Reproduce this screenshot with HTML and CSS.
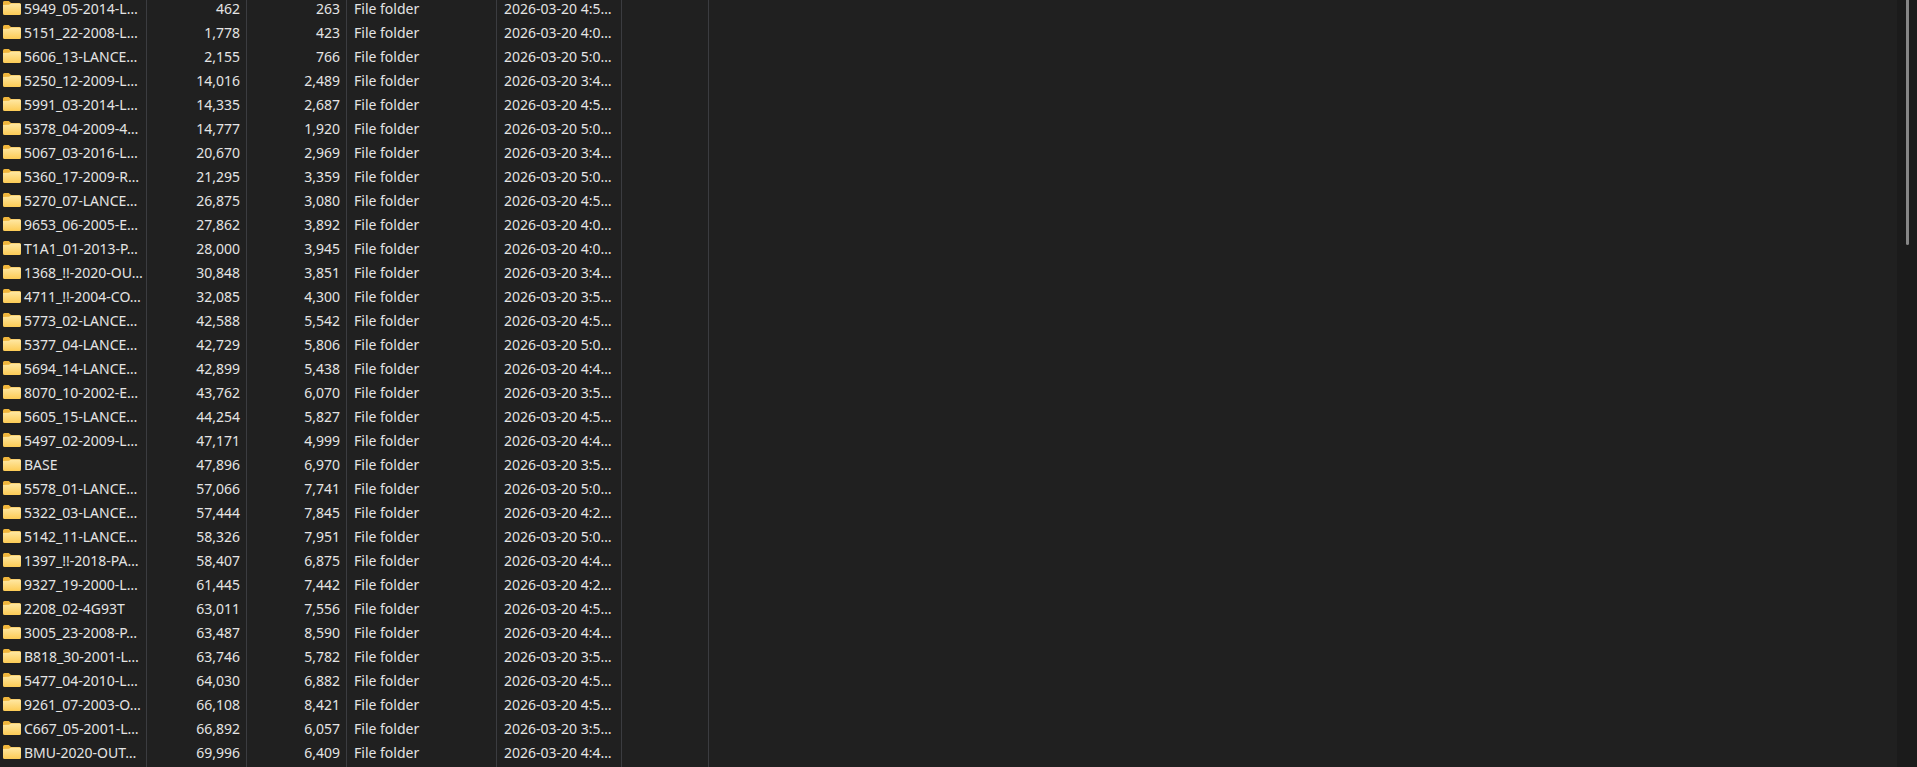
FILE: index.html
```html
<!DOCTYPE html>
<html lang="en">
<head>
<meta charset="UTF-8">
<title>File list</title>
<link rel="stylesheet" href="styles.css">
</head>
<body>
<svg class="defs" width="0" height="0">
  <defs>
    <linearGradient id="folderFront" x1="0" y1="0" x2="0" y2="1">
      <stop offset="0" stop-color="#ffe8a3"/>
      <stop offset="1" stop-color="#fccb55"/>
    </linearGradient>
    <symbol id="folder" viewBox="0 0 18 14">
      <path d="M0 1.500A1.500 1.500 0 0 1 1.500 0h4.300l2.200 2h8.500A1.500 1.500 0 0 1 18 3.500V6H0z" fill="#f0b63c"/>
      <path d="M0 4l6-.300L8 2.500h8.500A1.500 1.500 0 0 1 18 4v8.500A1.500 1.500 0 0 1 16.500 14h-15A1.500 1.500 0 0 1 0 12.500z" fill="url(#folderFront)"/>
    </symbol>
  </defs>
</svg>
<div class="window">
  <div class="list">
    <div class="row"><div class="cell name"><svg class="icon"><use href="#folder"/></svg>5949_05-2014-L…</div><div class="cell num">462</div><div class="cell num">263</div><div class="cell type">File folder</div><div class="cell date">2026-03-20 4:5…</div><div class="cell blank"></div></div>
    <div class="row"><div class="cell name"><svg class="icon"><use href="#folder"/></svg>5151_22-2008-L…</div><div class="cell num">1,778</div><div class="cell num">423</div><div class="cell type">File folder</div><div class="cell date">2026-03-20 4:0…</div><div class="cell blank"></div></div>
    <div class="row"><div class="cell name"><svg class="icon"><use href="#folder"/></svg>5606_13-LANCE…</div><div class="cell num">2,155</div><div class="cell num">766</div><div class="cell type">File folder</div><div class="cell date">2026-03-20 5:0…</div><div class="cell blank"></div></div>
    <div class="row"><div class="cell name"><svg class="icon"><use href="#folder"/></svg>5250_12-2009-L…</div><div class="cell num">14,016</div><div class="cell num">2,489</div><div class="cell type">File folder</div><div class="cell date">2026-03-20 3:4…</div><div class="cell blank"></div></div>
    <div class="row"><div class="cell name"><svg class="icon"><use href="#folder"/></svg>5991_03-2014-L…</div><div class="cell num">14,335</div><div class="cell num">2,687</div><div class="cell type">File folder</div><div class="cell date">2026-03-20 4:5…</div><div class="cell blank"></div></div>
    <div class="row"><div class="cell name"><svg class="icon"><use href="#folder"/></svg>5378_04-2009-4…</div><div class="cell num">14,777</div><div class="cell num">1,920</div><div class="cell type">File folder</div><div class="cell date">2026-03-20 5:0…</div><div class="cell blank"></div></div>
    <div class="row"><div class="cell name"><svg class="icon"><use href="#folder"/></svg>5067_03-2016-L…</div><div class="cell num">20,670</div><div class="cell num">2,969</div><div class="cell type">File folder</div><div class="cell date">2026-03-20 3:4…</div><div class="cell blank"></div></div>
    <div class="row"><div class="cell name"><svg class="icon"><use href="#folder"/></svg>5360_17-2009-R…</div><div class="cell num">21,295</div><div class="cell num">3,359</div><div class="cell type">File folder</div><div class="cell date">2026-03-20 5:0…</div><div class="cell blank"></div></div>
    <div class="row"><div class="cell name"><svg class="icon"><use href="#folder"/></svg>5270_07-LANCE…</div><div class="cell num">26,875</div><div class="cell num">3,080</div><div class="cell type">File folder</div><div class="cell date">2026-03-20 4:5…</div><div class="cell blank"></div></div>
    <div class="row"><div class="cell name"><svg class="icon"><use href="#folder"/></svg>9653_06-2005-E…</div><div class="cell num">27,862</div><div class="cell num">3,892</div><div class="cell type">File folder</div><div class="cell date">2026-03-20 4:0…</div><div class="cell blank"></div></div>
    <div class="row"><div class="cell name"><svg class="icon"><use href="#folder"/></svg>T1A1_01-2013-P…</div><div class="cell num">28,000</div><div class="cell num">3,945</div><div class="cell type">File folder</div><div class="cell date">2026-03-20 4:0…</div><div class="cell blank"></div></div>
    <div class="row"><div class="cell name"><svg class="icon"><use href="#folder"/></svg>1368_!!-2020-OU…</div><div class="cell num">30,848</div><div class="cell num">3,851</div><div class="cell type">File folder</div><div class="cell date">2026-03-20 3:4…</div><div class="cell blank"></div></div>
    <div class="row"><div class="cell name"><svg class="icon"><use href="#folder"/></svg>4711_!!-2004-CO…</div><div class="cell num">32,085</div><div class="cell num">4,300</div><div class="cell type">File folder</div><div class="cell date">2026-03-20 3:5…</div><div class="cell blank"></div></div>
    <div class="row"><div class="cell name"><svg class="icon"><use href="#folder"/></svg>5773_02-LANCE…</div><div class="cell num">42,588</div><div class="cell num">5,542</div><div class="cell type">File folder</div><div class="cell date">2026-03-20 4:5…</div><div class="cell blank"></div></div>
    <div class="row"><div class="cell name"><svg class="icon"><use href="#folder"/></svg>5377_04-LANCE…</div><div class="cell num">42,729</div><div class="cell num">5,806</div><div class="cell type">File folder</div><div class="cell date">2026-03-20 5:0…</div><div class="cell blank"></div></div>
    <div class="row"><div class="cell name"><svg class="icon"><use href="#folder"/></svg>5694_14-LANCE…</div><div class="cell num">42,899</div><div class="cell num">5,438</div><div class="cell type">File folder</div><div class="cell date">2026-03-20 4:4…</div><div class="cell blank"></div></div>
    <div class="row"><div class="cell name"><svg class="icon"><use href="#folder"/></svg>8070_10-2002-E…</div><div class="cell num">43,762</div><div class="cell num">6,070</div><div class="cell type">File folder</div><div class="cell date">2026-03-20 3:5…</div><div class="cell blank"></div></div>
    <div class="row"><div class="cell name"><svg class="icon"><use href="#folder"/></svg>5605_15-LANCE…</div><div class="cell num">44,254</div><div class="cell num">5,827</div><div class="cell type">File folder</div><div class="cell date">2026-03-20 4:5…</div><div class="cell blank"></div></div>
    <div class="row"><div class="cell name"><svg class="icon"><use href="#folder"/></svg>5497_02-2009-L…</div><div class="cell num">47,171</div><div class="cell num">4,999</div><div class="cell type">File folder</div><div class="cell date">2026-03-20 4:4…</div><div class="cell blank"></div></div>
    <div class="row"><div class="cell name"><svg class="icon"><use href="#folder"/></svg>BASE</div><div class="cell num">47,896</div><div class="cell num">6,970</div><div class="cell type">File folder</div><div class="cell date">2026-03-20 3:5…</div><div class="cell blank"></div></div>
    <div class="row"><div class="cell name"><svg class="icon"><use href="#folder"/></svg>5578_01-LANCE…</div><div class="cell num">57,066</div><div class="cell num">7,741</div><div class="cell type">File folder</div><div class="cell date">2026-03-20 5:0…</div><div class="cell blank"></div></div>
    <div class="row"><div class="cell name"><svg class="icon"><use href="#folder"/></svg>5322_03-LANCE…</div><div class="cell num">57,444</div><div class="cell num">7,845</div><div class="cell type">File folder</div><div class="cell date">2026-03-20 4:2…</div><div class="cell blank"></div></div>
    <div class="row"><div class="cell name"><svg class="icon"><use href="#folder"/></svg>5142_11-LANCE…</div><div class="cell num">58,326</div><div class="cell num">7,951</div><div class="cell type">File folder</div><div class="cell date">2026-03-20 5:0…</div><div class="cell blank"></div></div>
    <div class="row"><div class="cell name"><svg class="icon"><use href="#folder"/></svg>1397_!!-2018-PA…</div><div class="cell num">58,407</div><div class="cell num">6,875</div><div class="cell type">File folder</div><div class="cell date">2026-03-20 4:4…</div><div class="cell blank"></div></div>
    <div class="row"><div class="cell name"><svg class="icon"><use href="#folder"/></svg>9327_19-2000-L…</div><div class="cell num">61,445</div><div class="cell num">7,442</div><div class="cell type">File folder</div><div class="cell date">2026-03-20 4:2…</div><div class="cell blank"></div></div>
    <div class="row"><div class="cell name"><svg class="icon"><use href="#folder"/></svg>2208_02-4G93T</div><div class="cell num">63,011</div><div class="cell num">7,556</div><div class="cell type">File folder</div><div class="cell date">2026-03-20 4:5…</div><div class="cell blank"></div></div>
    <div class="row"><div class="cell name"><svg class="icon"><use href="#folder"/></svg>3005_23-2008-P…</div><div class="cell num">63,487</div><div class="cell num">8,590</div><div class="cell type">File folder</div><div class="cell date">2026-03-20 4:4…</div><div class="cell blank"></div></div>
    <div class="row"><div class="cell name"><svg class="icon"><use href="#folder"/></svg>B818_30-2001-L…</div><div class="cell num">63,746</div><div class="cell num">5,782</div><div class="cell type">File folder</div><div class="cell date">2026-03-20 3:5…</div><div class="cell blank"></div></div>
    <div class="row"><div class="cell name"><svg class="icon"><use href="#folder"/></svg>5477_04-2010-L…</div><div class="cell num">64,030</div><div class="cell num">6,882</div><div class="cell type">File folder</div><div class="cell date">2026-03-20 4:5…</div><div class="cell blank"></div></div>
    <div class="row"><div class="cell name"><svg class="icon"><use href="#folder"/></svg>9261_07-2003-O…</div><div class="cell num">66,108</div><div class="cell num">8,421</div><div class="cell type">File folder</div><div class="cell date">2026-03-20 4:5…</div><div class="cell blank"></div></div>
    <div class="row"><div class="cell name"><svg class="icon"><use href="#folder"/></svg>C667_05-2001-L…</div><div class="cell num">66,892</div><div class="cell num">6,057</div><div class="cell type">File folder</div><div class="cell date">2026-03-20 3:5…</div><div class="cell blank"></div></div>
    <div class="row"><div class="cell name"><svg class="icon"><use href="#folder"/></svg>BMU-2020-OUT…</div><div class="cell num">69,996</div><div class="cell num">6,409</div><div class="cell type">File folder</div><div class="cell date">2026-03-20 4:4…</div><div class="cell blank"></div></div>
    <div class="row"><div class="cell name"></div><div class="cell num"></div><div class="cell num"></div><div class="cell type"></div><div class="cell date"></div><div class="cell blank"></div></div>
  </div>
  <div class="scrollbar"><div class="thumb"></div></div>
</div>
</body>
</html>
```

FILE: styles.css
```css
html, body {
    margin: 0;
    height: 100%;
    overflow: hidden;
    background: #202020;
}
.defs { display: block; height: 0; }
.window {
    display: flex;
    height: 767px;
    overflow: hidden;
    font-family: "Noto Sans", "Open Sans", sans-serif;
    font-size: 14px;
    color: #e4e4e4;
}
.list { flex: 1; margin-top: -4px; }
.row {
    display: grid;
    grid-template-columns: 147px 100px 100px 150px 125px 87px;
    height: 24px;
    line-height: 26px;
}
.cell {
    border-right: 1px solid #3b3c40;
    white-space: nowrap;
    overflow: hidden;
}
.name { display: flex; align-items: flex-start; }
.icon {
    width: 18px;
    height: 14px;
    margin: 5px 3px 0;
    flex: none;
}
.num { text-align: right; padding-right: 6px; }
.type, .date { padding-left: 7px; }
.scrollbar {
    width: 20px;
    background: #1b1b1b;
    display: flex;
    justify-content: center;
    align-items: flex-start;
}
.thumb {
    width: 3px;
    height: 245px;
    margin-left: 1px;
    border-radius: 0 0 2px 2px;
    background: #868686;
}
```
